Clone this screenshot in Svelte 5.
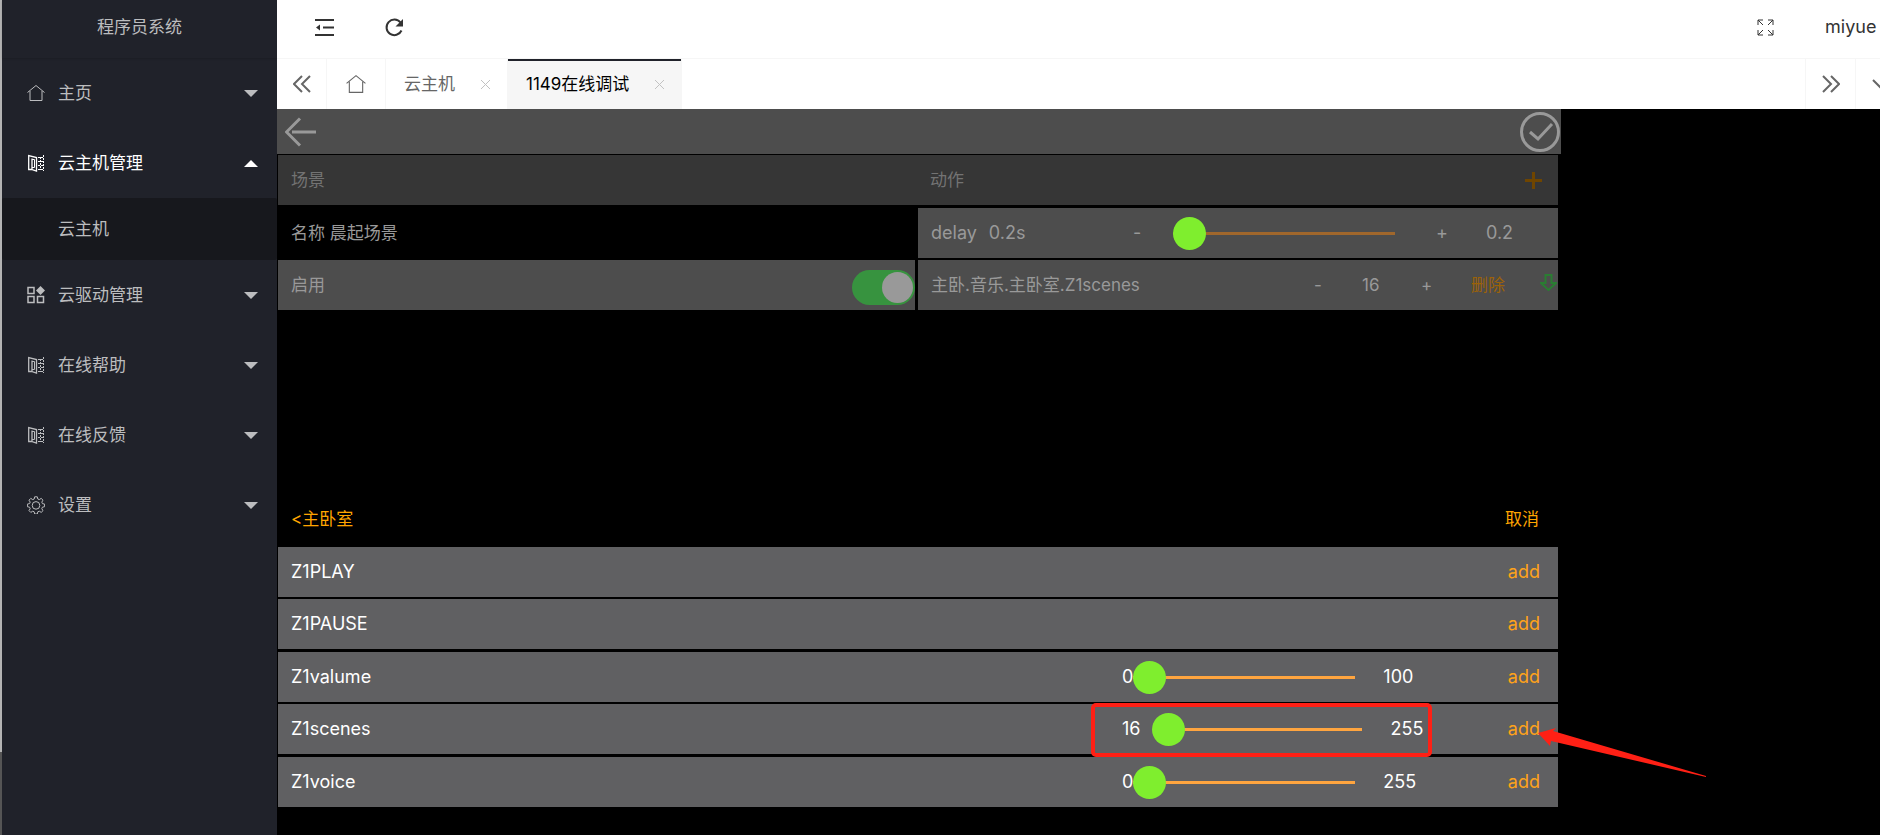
<script lang="ts">
	interface MenuItem {
		title: string;
		icon: 'home' | 'book' | 'apps' | 'gear';
		children?: string[];
	}

	interface Command {
		name: string;
		value?: number;
		max?: number;
		marked?: boolean;
	}

	const menu: MenuItem[] = [
		{ title: '主页', icon: 'home' },
		{ title: '云主机管理', icon: 'book', children: ['云主机'] },
		{ title: '云驱动管理', icon: 'apps' },
		{ title: '在线帮助', icon: 'book' },
		{ title: '在线反馈', icon: 'book' },
		{ title: '设置', icon: 'gear' }
	];

	const tabs = ['云主机', '1149在线调试'];

	let openMenu = $state('云主机管理');
	let activeTab = $state('1149在线调试');
	let enabled = $state(true);
	let delay = $state(0.2);
	let scene = $state(16);

	let commands = $state<Command[]>([
		{ name: 'Z1PLAY' },
		{ name: 'Z1PAUSE' },
		{ name: 'Z1valume', value: 0, max: 100 },
		{ name: 'Z1scenes', value: 16, max: 255, marked: true },
		{ name: 'Z1voice', value: 0, max: 255 }
	]);

	function toggleMenu(title: string) {
		openMenu = openMenu === title ? '' : title;
	}

	function stepDelay(by: number) {
		delay = Math.max(0.2, Math.round((delay + by) * 10) / 10);
	}
</script>

{#snippet homeIcon()}
	<svg class="icon" viewBox="0 0 18 18" aria-hidden="true">
		<path d="M0.5 8.5 9 1.5l8.5 7M3 7v9.5h12V7" />
	</svg>
{/snippet}

{#snippet closeIcon()}
	<svg class="close-icon" viewBox="0 0 11 11" aria-hidden="true"><path d="M1 1l9 9M10 1l-9 9" /></svg>
{/snippet}

<div class="layout">
	<aside class="side">
		<h1 class="side-title">程序员系统</h1>
		<nav>
			<ul class="menu">
				{#each menu as item (item.title)}
					<li>
						<button
							class="menu-item"
							class:open={openMenu === item.title}
							aria-expanded={openMenu === item.title}
							onclick={() => toggleMenu(item.title)}
						>
							{#if item.icon === 'home'}
								{@render homeIcon()}
							{:else if item.icon === 'book'}
								<svg class="icon" viewBox="0 0 18 18" aria-hidden="true">
									<path d="M5 15.500H1.700V1.500L9.500 3.500v13.500L5 15.500V4.500" stroke-width="1.300" />
									<path d="M5 5.500h2.500v8H5" />
									<path d="M11 3.500h6M11 7.500h6M11 11.500h6M11 15.500h6M13.500 3v13M16.500 1v16" stroke-dasharray="2 1" />
								</svg>
							{:else if item.icon === 'apps'}
								<svg class="icon" viewBox="0 0 18 18" aria-hidden="true">
									<path d="M1 1.500h6v6H1zM1 10.500h6v6H1zM10.500 10.500h6v6h-6z" stroke-width="1.500" />
									<path d="M13.500 0 18 4.500 13.500 9 9 4.500z" fill="currentColor" stroke="none" />
								</svg>
							{:else}
								<svg class="icon" viewBox="0 0 18 18" aria-hidden="true">
									<path
										d="M7.700 0.800h2.600l.5 2.200 1.500.6 1.900-1.200 1.800 1.800-1.200 1.900.6 1.500 2.200.5v2.600l-2.200.5-.6 1.500 1.200 1.900-1.800 1.800-1.900-1.200-1.500.6-.5 2.200H7.700l-.5-2.200-1.500-.6-1.900 1.200L2 14.600l1.200-1.900-.6-1.500-2.200-.5V8.100l2.200-.5.6-1.500L2 4.200l1.800-1.800 1.900 1.200 1.500-.6z"
									/>
									<circle cx="9" cy="9.400" r="3.800" />
								</svg>
							{/if}
							<span class="menu-text">{item.title}</span>
							<svg class="caret" viewBox="0 0 14 7" aria-hidden="true"><path d="M0 0h14L7 7z" /></svg>
						</button>
						{#if item.children && openMenu === item.title}
							<ul class="submenu">
								{#each item.children as child}
									<li><a href="#host">{child}</a></li>
								{/each}
							</ul>
						{/if}
					</li>
				{/each}
			</ul>
		</nav>
	</aside>

	<div class="body">
		<header class="header">
			<button class="tool" aria-label="收起菜单">
				<svg class="tool-icon" viewBox="0 0 19 19" aria-hidden="true">
					<path d="M0 2h19M8 9.500h11M0 17h19" />
					<path d="M5 6.500v6L1 9.500z" fill="currentColor" stroke="none" />
				</svg>
			</button>
			<button class="tool" aria-label="刷新">
				<svg class="tool-icon" viewBox="0 0 19 19" aria-hidden="true">
					<path d="M16.500 12.500A7.800 7.800 0 1 1 15.500 4.500" />
					<path d="M18 1v7.500h-7.500z" fill="currentColor" stroke="none" />
				</svg>
			</button>
			<span class="spacer"></span>
			<button class="tool full" aria-label="全屏">
				<svg class="full-icon" viewBox="0 0 17 17" aria-hidden="true">
					<path d="M1 6V1h5M1 1l5 5M11 1h5v5M16 1l-5 5M1 11v5h5M1 16l5-5M16 11v5h-5M16 16l-5-5" />
				</svg>
			</button>
			<a class="user" href="#user">miyue</a>
		</header>

		<div class="tabs">
			<button class="tab-tool" aria-label="向左">
				<svg class="chev" viewBox="0 0 18 18" aria-hidden="true"><path d="M9 1 1 9l8 8M17 1 9 9l8 8" /></svg>
			</button>
			<button class="tab-tool home" aria-label="主页">{@render homeIcon()}</button>
			{#each tabs as tab (tab)}
				<div class="tab" class:active={activeTab === tab}>
					<button class="tab-name" onclick={() => (activeTab = tab)}>{tab}</button>
					<button class="tab-close" aria-label="关闭 {tab}">{@render closeIcon()}</button>
				</div>
			{/each}
			<span class="spacer"></span>
			<button class="tab-tool right" aria-label="向右">
				<svg class="chev" viewBox="0 0 18 18" aria-hidden="true"><path d="M1 1l8 8-8 8M9 1l8 8-8 8" /></svg>
			</button>
			<button class="tab-tool right more" aria-label="更多">
				<svg class="chev" viewBox="0 0 18 18" aria-hidden="true"><path d="M1 5l8 8 8-8" /></svg>
			</button>
		</div>

		<main class="panel">
			<div class="bar">
				<button class="bar-button" aria-label="返回">
					<svg class="back-icon" viewBox="0 0 32 30" aria-hidden="true"><path d="M15 1.500 1.500 15 15 28.500M7 15h24" /></svg>
				</button>
				<button class="bar-button" aria-label="保存">
					<svg class="done-icon" viewBox="0 0 40 40" aria-hidden="true">
						<circle cx="20" cy="20" r="18.500" />
						<path d="M10 20l8 7 14-15" />
					</svg>
				</button>
			</div>

			<div class="head">
				<span>场景</span>
				<span>动作</span>
				<button class="plus" aria-label="添加动作">
					<svg viewBox="0 0 17 17" aria-hidden="true"><path d="M8.500 0v17M0 8.500h17" /></svg>
				</button>
			</div>

			<div class="columns">
				<div class="stack">
					<div class="row plain">名称 晨起场景</div>
					<div class="row">
						<label for="enabled">启用</label>
						<input class="switch" id="enabled" type="checkbox" role="switch" bind:checked={enabled} />
					</div>
				</div>
				<div class="stack">
					<div class="row delay">
						<label class="delay-label" for="delay"><span>delay</span><span>{delay}s</span></label>
						<button onclick={() => stepDelay(-0.1)}>-</button>
						<input
							class="range dim"
							id="delay"
							type="range"
							min="0.2"
							max="10"
							step="0.1"
							bind:value={delay}
							style="--from: {((delay - 0.2) / 9.8) * 100}%"
						/>
						<button onclick={() => stepDelay(0.1)}>+</button>
						<span>{delay}</span>
					</div>
					<div class="row action">
						<span>主卧.音乐.主卧室.Z1scenes</span>
						<button onclick={() => (scene -= 1)}>-</button>
						<span>{scene}</span>
						<button onclick={() => (scene += 1)}>+</button>
						<button class="remove">删除</button>
						<button class="down" aria-label="下移">
							<svg viewBox="0 0 17 17" aria-hidden="true"><path d="M5.500 1h6v8H16l-7.500 7L1 9h4.500z" /></svg>
						</button>
					</div>
				</div>
			</div>

			<section class="picker">
				<div class="picker-head">
					<button>&lt;主卧室</button>
					<button>取消</button>
				</div>
				<ul class="commands">
					{#each commands as cmd (cmd.name)}
						<li class="command">
							<label for={cmd.name}>{cmd.name}</label>
							<div class="level">
								{#if cmd.max !== undefined}
									<span>{cmd.value}</span>
									<input
										class="range"
										id={cmd.name}
										type="range"
										min="0"
										max={cmd.max}
										bind:value={cmd.value}
										style="--from: {((cmd.value ?? 0) / cmd.max) * 100}%"
									/>
									<span class="max">{cmd.max}</span>
								{/if}
								{#if cmd.marked}<div class="mark"></div>{/if}
							</div>
							<button class="add">add</button>
							{#if cmd.marked}
								<svg class="pointer" viewBox="0 0 169 50" aria-hidden="true">
									<path d="M0 6 18 1l-3 3L168 49v1L13 14l-1 5z" />
								</svg>
							{/if}
						</li>
					{/each}
				</ul>
			</section>
		</main>
	</div>
</div>

<style>
	:global(body) {
		background: #000;
		font-family: Inter, 'Noto Sans CJK SC', sans-serif;
		font-size: 17px;
		line-height: 24px;
	}

	button,
	input {
		margin: 0;
		padding: 0;
		border: 0;
		background: none;
		color: inherit;
		font: inherit;
		text-align: left;
		cursor: pointer;
	}

	a {
		color: inherit;
		text-decoration: none;
	}

	ul {
		margin: 0;
		padding: 0;
		list-style: none;
	}

	svg {
		display: block;
		fill: none;
		stroke: currentColor;
	}

	.spacer {
		flex: 1;
	}

	.layout {
		display: flex;
		min-height: 100vh;
		overflow: hidden;
	}

	/* Side menu */
	.side {
		flex: none;
		box-sizing: border-box;
		width: 277px;
		border-left: 2px solid;
		border-image: linear-gradient(#b4b4b4 90%, #555 90%) 1;
		background: #20222a;
		color: #bcbdbf;
	}

	.side-title {
		margin: 0;
		height: 58px;
		box-sizing: border-box;
		padding-top: 15px;
		box-shadow: 0 1px 2px rgba(0, 0, 0, 0.15);
		font-size: 17px;
		font-weight: 400;
		line-height: 24px;
		text-align: center;
	}

	.menu-item {
		display: flex;
		align-items: center;
		width: 100%;
		height: 70px;
		padding: 0 19px 0 25px;
	}

	.menu-item.open {
		color: #fff;
	}

	.menu-text {
		flex: 1;
		margin-left: 13px;
	}

	.icon {
		width: 18px;
		height: 18px;
	}

	.caret {
		width: 14px;
		height: 7px;
		fill: currentColor;
		stroke: none;
	}

	.open .caret {
		transform: rotate(180deg);
	}

	.submenu {
		border-radius: 2px;
		background: #17181d;
	}

	.submenu a {
		display: block;
		padding: 19px 0 19px 56px;
	}

	/* Header and tabs */
	.body {
		flex: 1;
		min-width: 0;
	}

	.header {
		display: flex;
		align-items: center;
		box-sizing: border-box;
		height: 59px;
		padding: 0 0 4px 38px;
		border-bottom: 1px solid #f6f6f6;
		background: #fff;
		color: #333;
		overflow: hidden;
	}

	.tool {
		margin-right: 51px;
	}

	.tool-icon {
		width: 19px;
		height: 19px;
		stroke-width: 2;
	}

	.full-icon {
		width: 17px;
		height: 17px;
	}

	.user {
		width: 55px;
		font-size: 18px;
		white-space: nowrap;
	}

	.tabs {
		display: flex;
		height: 50px;
		background: #fff;
		color: #666;
		overflow: hidden;
	}

	.tab-tool {
		display: flex;
		flex: none;
		align-items: center;
		justify-content: center;
		width: 50px;
		border-right: 1px solid #f6f6f6;
	}

	.tab-tool.home {
		width: 59px;
	}

	.tab-tool.right {
		border-right: 0;
		border-left: 1px solid #f6f6f6;
	}

	.tab-tool.more {
		margin-right: -25px;
	}

	.home .icon {
		width: 20px;
		height: 20px;
	}

	.chev {
		width: 18px;
		height: 18px;
		stroke-width: 2;
	}

	.tab {
		display: flex;
		align-items: center;
		padding: 0 16px 0 18px;
		border-right: 1px solid #f6f6f6;
	}

	.tab.active {
		background: #f6f6f6;
		box-shadow: inset 0 2px #20222a;
		color: #000;
	}

	.tab-close {
		margin-left: 25px;
		color: #c2c2c2;
	}

	.close-icon {
		width: 11px;
		height: 11px;
	}

	/* Scene editor */
	.panel {
		max-width: 1284px;
		background: #000;
		color: #999;
	}

	.bar {
		display: flex;
		align-items: center;
		justify-content: space-between;
		height: 45px;
		padding: 0 1px 0 8px;
		background: #4d4d4d;
		color: #999;
	}

	.back-icon {
		width: 32px;
		height: 30px;
		stroke-width: 3;
	}

	.done-icon {
		width: 40px;
		height: 40px;
		stroke-width: 3;
	}

	.head {
		display: grid;
		grid-template-columns: 1fr 1fr 17px;
		align-items: center;
		height: 50px;
		margin: 1px 3px 0 1px;
		padding: 0 16px 0 13px;
		background: #363636;
		color: #737373;
	}

	.head > :nth-child(2) {
		margin-left: 22px;
	}

	.plus svg {
		width: 17px;
		height: 17px;
		stroke: #6f4500;
		stroke-width: 3;
	}

	.columns {
		display: grid;
		grid-template-columns: 637fr 640fr;
		gap: 3px;
		margin: 3px 3px 0 1px;
	}

	.stack {
		display: grid;
		gap: 2px;
	}

	.row {
		display: flex;
		align-items: center;
		justify-content: space-between;
		box-sizing: border-box;
		height: 50px;
		padding-left: 13px;
		background: #4d4d4d;
	}

	.row.plain {
		background: none;
	}

	.row.delay {
		display: grid;
		grid-template-columns: 1fr 40px 263px 50px 72px;
		font-size: 18px;
	}

	.row.action {
		display: grid;
		grid-template-columns: 1fr 48px 59px 50px 69px 18px;
	}

	.delay-label {
		display: flex;
		gap: 12px;
	}

	.remove {
		color: #9c6208;
	}

	.down {
		margin-bottom: 6px;
	}

	.down svg {
		width: 17px;
		height: 17px;
		stroke: #2a7d32;
		stroke-width: 2;
	}

	.switch {
		appearance: none;
		width: 63px;
		height: 35px;
		margin-top: 5px;
		padding: 2px;
		box-sizing: border-box;
		border-radius: 18px;
		background: #777;
	}

	.switch::before {
		content: '';
		display: block;
		width: 31px;
		height: 31px;
		border-radius: 50%;
		background: #999;
	}

	.switch:checked {
		background: #37933f;
	}

	.switch:checked::before {
		margin-left: auto;
	}

	.range {
		--line: #ffa53f;
		appearance: none;
		width: 222px;
		height: 33px;
	}

	.range.dim {
		--line: #a0672c;
	}

	.range::-webkit-slider-runnable-track {
		height: 3px;
		background: linear-gradient(to right, transparent var(--from), var(--line) var(--from));
	}

	.range::-webkit-slider-thumb {
		appearance: none;
		width: 33px;
		height: 33px;
		margin-top: -15px;
		border-radius: 50%;
		background: #7fee2e;
	}

	/* Command picker */
	.picker {
		margin: 184px 3px 0 1px;
		color: #fff;
	}

	.picker-head {
		display: flex;
		align-items: center;
		justify-content: space-between;
		box-sizing: border-box;
		height: 53px;
		padding: 0 19px 3px 13px;
		color: #ffa500;
	}

	.command {
		position: relative;
		display: grid;
		grid-template-columns: 1fr 384px 34px;
		align-items: center;
		height: 50px;
		margin-bottom: 2px;
		padding: 0 18px 0 13px;
		background: #606062;
		font-size: 18px;
	}

	.command:nth-child(even) {
		margin-bottom: 3px;
	}

	.level {
		position: relative;
		display: flex;
		align-items: center;
		height: 50px;
	}

	.max {
		margin-left: 28px;
	}

	.add {
		color: #ffa31a;
		text-align: right;
	}

	.mark {
		position: absolute;
		top: -1px;
		bottom: -3px;
		left: -31px;
		width: 341px;
		box-sizing: border-box;
		border: 4px solid #ff2015;
		border-radius: 5px;
		pointer-events: none;
	}

	.pointer {
		position: absolute;
		top: 23px;
		right: -149px;
		z-index: 1;
		width: 169px;
		height: 50px;
		fill: #ff2015;
		stroke: none;
		pointer-events: none;
	}
</style>
